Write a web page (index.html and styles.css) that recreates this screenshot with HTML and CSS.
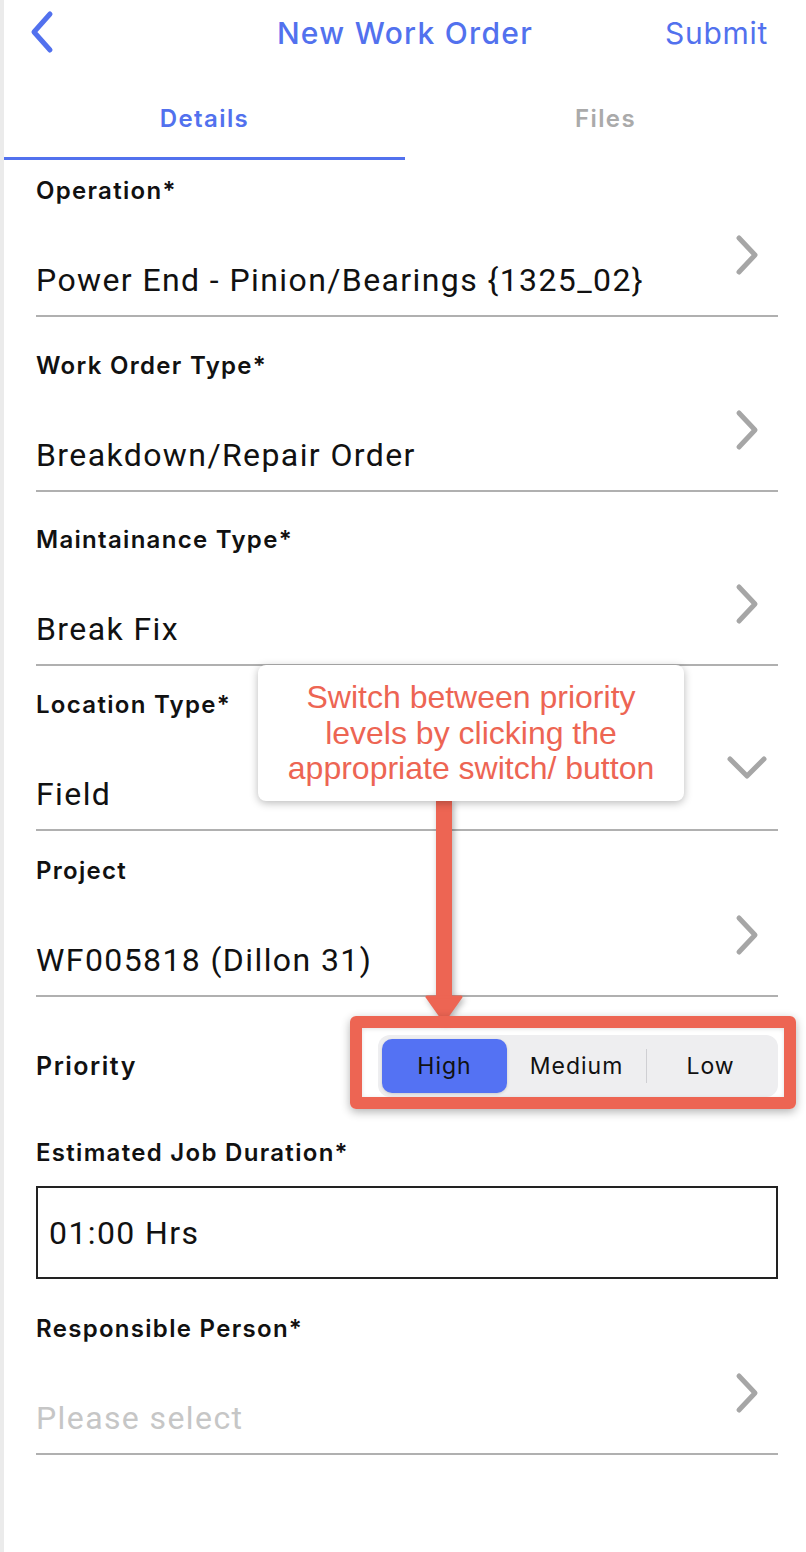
FILE: index.html
```html
<!DOCTYPE html>
<html lang="en">
<head>
<meta charset="utf-8">
<title>New Work Order</title>
<link rel="stylesheet" href="styles.css">
</head>
<body>
<div class="app">
  <header class="nav">
    <div class="nav-left">
      <svg class="back" width="28" height="44" viewBox="0 0 28 44"><path d="M22 4 L6 22 L22 40" fill="none" stroke="#5271ee" stroke-width="5" stroke-linecap="round" stroke-linejoin="round"/></svg>
    </div>
    <h1 class="nav-title">New Work Order</h1>
    <div class="nav-right"><span class="submit">Submit</span></div>
  </header>

  <nav class="tabs">
    <div class="tab active">Details</div>
    <div class="tab">Files</div>
  </nav>

  <main class="form">
    <div class="field f1">
      <div class="label">Operation*</div>
      <div class="value-row">
        <span class="value">Power End - Pinion/Bearings {1325_02}</span>
        <svg class="chev-right" width="24" height="42" viewBox="0 0 24 42"><path d="M4 4 L20 21 L4 38" fill="none" stroke="#a6a6a6" stroke-width="5" stroke-linecap="round" stroke-linejoin="round"/></svg>
      </div>
    </div>

    <div class="field f2">
      <div class="label">Work Order Type*</div>
      <div class="value-row">
        <span class="value">Breakdown/Repair Order</span>
        <svg class="chev-right" width="24" height="42" viewBox="0 0 24 42"><path d="M4 4 L20 21 L4 38" fill="none" stroke="#a6a6a6" stroke-width="5" stroke-linecap="round" stroke-linejoin="round"/></svg>
      </div>
    </div>

    <div class="field f3">
      <div class="label">Maintainance Type*</div>
      <div class="value-row">
        <span class="value">Break Fix</span>
        <svg class="chev-right" width="24" height="42" viewBox="0 0 24 42"><path d="M4 4 L20 21 L4 38" fill="none" stroke="#a6a6a6" stroke-width="5" stroke-linecap="round" stroke-linejoin="round"/></svg>
      </div>
    </div>

    <div class="field f4">
      <div class="label">Location Type*</div>
      <div class="value-row">
        <span class="value">Field</span>
        <svg class="chev-down" width="42" height="28" viewBox="0 0 42 28"><path d="M4 5 L21 22 L38 5" fill="none" stroke="#a6a6a6" stroke-width="5" stroke-linecap="round" stroke-linejoin="round"/></svg>
      </div>
    </div>

    <div class="field f5">
      <div class="label">Project</div>
      <div class="value-row">
        <span class="value">WF005818 (Dillon 31)</span>
        <svg class="chev-right" width="24" height="42" viewBox="0 0 24 42"><path d="M4 4 L20 21 L4 38" fill="none" stroke="#a6a6a6" stroke-width="5" stroke-linecap="round" stroke-linejoin="round"/></svg>
      </div>
    </div>

    <div class="priority-row">
      <span class="priority-label">Priority</span>
      <div class="segmented">
        <span class="seg seg-high active">High</span>
        <span class="seg seg-medium">Medium</span>
        <span class="sep"></span>
        <span class="seg seg-low">Low</span>
      </div>
    </div>

    <div class="box-field">
      <div class="label">Estimated Job Duration*</div>
      <div class="input">01:00 Hrs</div>
    </div>

    <div class="field f6">
      <div class="label">Responsible Person*</div>
      <div class="value-row">
        <span class="value placeholder">Please select</span>
        <svg class="chev-right" width="24" height="42" viewBox="0 0 24 42"><path d="M4 4 L20 21 L4 38" fill="none" stroke="#a6a6a6" stroke-width="5" stroke-linecap="round" stroke-linejoin="round"/></svg>
      </div>
    </div>
  </main>

  <svg class="pointer" width="56" height="236" viewBox="0 0 56 236">
    <rect x="16" y="6" width="16" height="204" fill="#ed6553"/>
    <path d="M7 203 L41 203 L24 227 Z" fill="#ed6553" stroke="#ed6553" stroke-width="3" stroke-linejoin="round"/>
  </svg>
  <div class="callout">Switch between priority<br>levels by clicking the<br>appropriate switch/ button</div>
  <div class="highlight"></div>
</div>
</body>
</html>
```

FILE: styles.css
```css
* { box-sizing: border-box; }

html, body {
  margin: 0;
  padding: 0;
  background: #ffffff;
}

body {
  font-family: "Inter", "Roboto", sans-serif;
  color: #111;
}

.app {
  position: relative;
  width: 806px;
  min-height: 1552px;
  border-left: 4px solid #ebebeb;
  background: #fff;
}

/* Navigation bar */
.nav {
  display: grid;
  grid-template-columns: 1fr auto 1fr;
  align-items: center;
  height: 66px;
  padding: 0 24px;
}

.nav-left { display: flex; align-items: center; }

.back { display: block; margin-top: -2px; }

.nav-title {
  margin: 0;
  font-size: 30px;
  font-weight: 500;
  letter-spacing: 1.3px;
  color: #5271ee;
}

.nav-right { display: flex; justify-content: flex-end; }

.submit {
  margin-right: 14px;
  font-size: 30px;
  font-weight: 400;
  letter-spacing: 0.7px;
  color: #5271ee;
}

/* Tabs */
.tabs {
  display: flex;
  height: 94px;
}

.tab {
  flex: 1;
  text-align: center;
  padding-top: 38px;
  line-height: 30px;
  font-size: 24px;
  font-weight: 600;
  letter-spacing: 1.4px;
  color: #aaaaaa;
}

.tab.active {
  color: #5271ee;
  border-bottom: 3px solid #5271ee;
}

/* Form */
.form {
  padding: 0 28px 0 32px;
}

.label {
  height: 28px;
  line-height: 28px;
  font-size: 24px;
  font-weight: 600;
  letter-spacing: 1.3px;
  color: #111;
}

.field { border-bottom: 2px solid #b0b0b0; }
.f1 { margin-top: 17px; }
.f2 { margin-top: 35px; }
.f3 { margin-top: 34px; }
.f4 { margin-top: 25px; }
.f5 { margin-top: 26px; }
.f6 { margin-top: 36px; }

.value-row {
  display: flex;
  align-items: flex-end;
  justify-content: space-between;
  height: 110px;
  padding-bottom: 17px;
}

.value {
  font-family: "Roboto", sans-serif;
  font-size: 32px;
  line-height: 36px;
  letter-spacing: 1.4px;
  color: #111;
}

.value.placeholder { color: #c6c6c6; }

.chev-right {
  display: block;
  flex: none;
  margin-right: 19px;
  margin-bottom: 22px;
}

.chev-down {
  display: block;
  flex: none;
  margin-right: 10px;
  margin-bottom: 30px;
}

/* Priority */
.priority-row {
  display: flex;
  align-items: center;
  justify-content: space-between;
  padding-top: 38px;
}

.priority-label {
  font-size: 25px;
  font-weight: 600;
  letter-spacing: 1.5px;
}

.segmented {
  display: flex;
  align-items: center;
  width: 400px;
  height: 62px;
  padding: 4px;
  background: #eeeef0;
  border-radius: 12px;
}

.seg {
  height: 54px;
  line-height: 54px;
  text-align: center;
  font-size: 23px;
  letter-spacing: 1px;
  color: #111;
  border-radius: 10px;
}

.seg-high { flex: 0 0 125px; }
.seg-medium { flex: 0 0 139px; }
.seg-low { flex: 1; }

.seg.active {
  background: #5472f3;
  box-shadow: 0 1px 3px rgba(0, 0, 0, 0.15);
}

.sep {
  flex: none;
  width: 1px;
  height: 34px;
  background: #cfcfd3;
}

/* Duration box */
.box-field { margin-top: 42px; }

.input {
  margin-top: 19px;
  height: 93px;
  border: 2px solid #222;
  padding-left: 11px;
  display: flex;
  align-items: center;
  font-family: "Roboto", sans-serif;
  font-size: 32px;
  letter-spacing: 1.4px;
  color: #111;
}

/* Annotation overlay */
.callout {
  position: absolute;
  left: 254px;
  top: 665px;
  width: 426px;
  height: 136px;
  padding-top: 15px;
  background: #fff;
  border-radius: 8px;
  box-shadow: 0 2px 8px rgba(0, 0, 0, 0.28);
  text-align: center;
  font-family: "Liberation Sans", Arial, sans-serif;
  font-size: 32px;
  line-height: 35.5px;
  color: #ed6553;
  z-index: 3;
}

.pointer {
  position: absolute;
  left: 416px;
  top: 794px;
  filter: drop-shadow(2px 2px 3px rgba(0, 0, 0, 0.3));
  z-index: 2;
}

.highlight {
  position: absolute;
  left: 346px;
  top: 1016px;
  width: 446px;
  height: 93px;
  border: 12px solid #ed6553;
  border-radius: 6px;
  box-shadow: 0 3px 10px rgba(0, 0, 0, 0.3), inset 0 1px 4px rgba(0, 0, 0, 0.12);
  z-index: 2;
}
```
